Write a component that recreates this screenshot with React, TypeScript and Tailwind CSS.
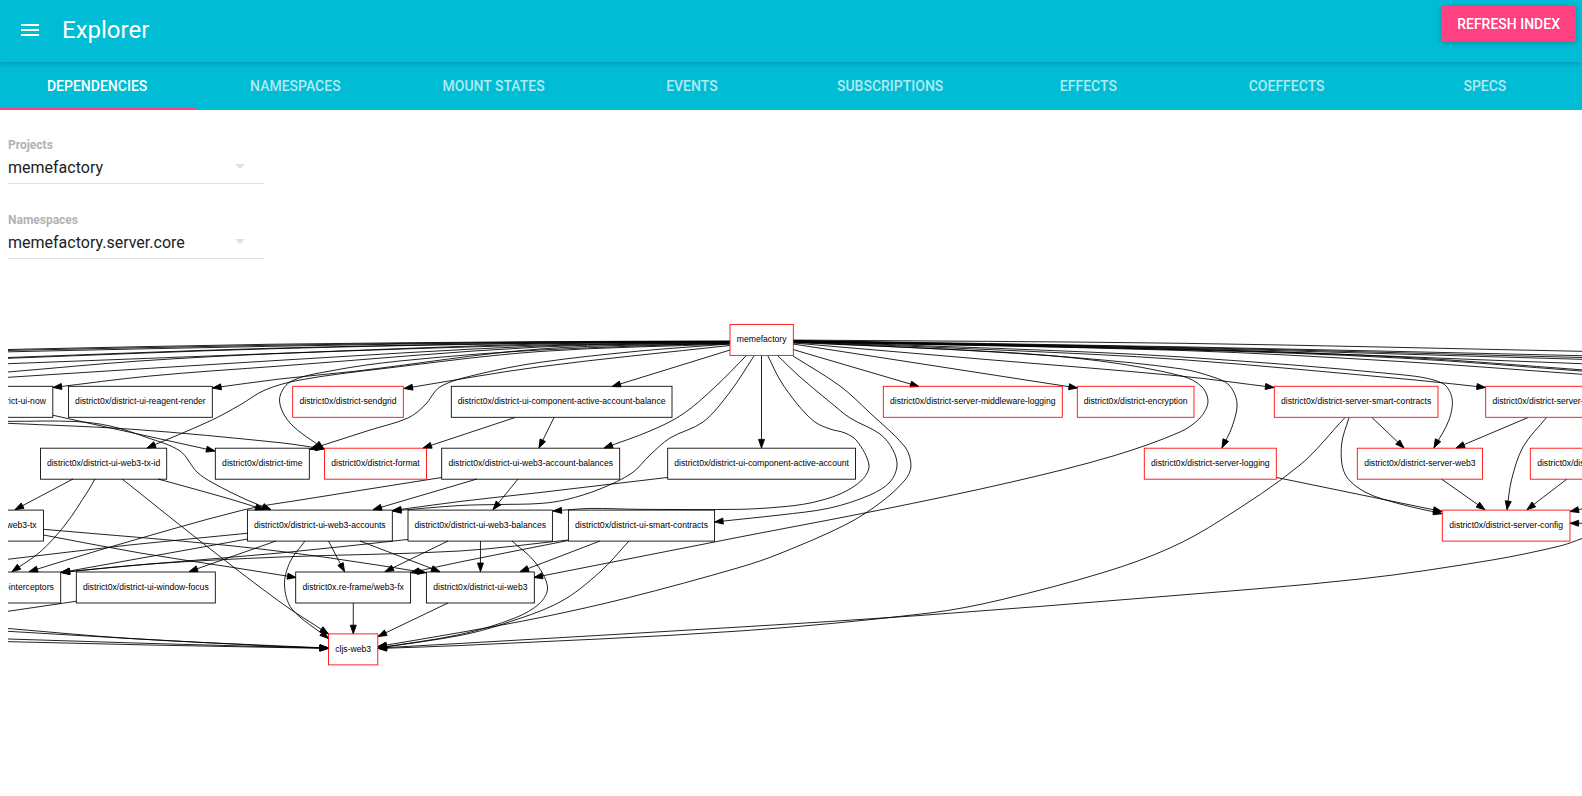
import { useState } from 'react'

type Point = [number, number]

interface GraphNode {
  row: number
  left: number
  right: number
  label: string
  server?: boolean
  align?: 'start' | 'end'
}

const TABS = [
  'Dependencies',
  'Namespaces',
  'Mount states',
  'Events',
  'Subscriptions',
  'Effects',
  'Coeffects',
  'Specs',
]

const NODES: GraphNode[] = [
  { row: 0, left: 730, right: 793.3, label: 'memefactory', server: true },

  { row: 1, left: -60, right: 52.8, label: 'rict-ui-now', align: 'end' },
  { row: 1, left: 68.5, right: 212.3, label: 'district0x/district-ui-reagent-render' },
  { row: 1, left: 292.7, right: 403.3, label: 'district0x/district-sendgrid', server: true },
  { row: 1, left: 451.3, right: 672, label: 'district0x/district-ui-component-active-account-balance' },
  { row: 1, left: 883.3, right: 1062.3, label: 'district0x/district-server-middleware-logging', server: true },
  { row: 1, left: 1077.3, right: 1194, label: 'district0x/district-encryption', server: true },
  { row: 1, left: 1274.3, right: 1438, label: 'district0x/district-server-smart-contracts', server: true },
  { row: 1, left: 1485.7, right: 1640, label: 'district0x/district-server-', server: true, align: 'start' },

  { row: 2, left: 40.5, right: 166.7, label: 'district0x/district-ui-web3-tx-id' },
  { row: 2, left: 215.3, right: 309.3, label: 'district0x/district-time' },
  { row: 2, left: 324.5, right: 426.5, label: 'district0x/district-format', server: true },
  { row: 2, left: 441.7, right: 619.7, label: 'district0x/district-ui-web3-account-balances' },
  { row: 2, left: 667.7, right: 855.5, label: 'district0x/district-ui-component-active-account' },
  { row: 2, left: 1144.3, right: 1276.3, label: 'district0x/district-server-logging', server: true },
  { row: 2, left: 1357.3, right: 1482.5, label: 'district0x/district-server-web3', server: true },
  { row: 2, left: 1530.3, right: 1660, label: 'district0x/dis', server: true, align: 'start' },

  { row: 3, left: -60, right: 43.5, label: 'web3-tx', align: 'end' },
  { row: 3, left: 247.4, right: 392.3, label: 'district0x/district-ui-web3-accounts' },
  { row: 3, left: 408, right: 552.4, label: 'district0x/district-ui-web3-balances' },
  { row: 3, left: 568.4, right: 714.6, label: 'district0x/district-ui-smart-contracts' },
  { row: 3, left: 1442.3, right: 1570, label: 'district0x/district-server-config', server: true },

  { row: 4, left: -60, right: 60.7, label: '-interceptors', align: 'end' },
  { row: 4, left: 76.3, right: 215.3, label: 'district0x/district-ui-window-focus' },
  { row: 4, left: 295.7, right: 410.6, label: 'district0x.re-frame/web3-fx' },
  { row: 4, left: 426.4, right: 534.3, label: 'district0x/district-ui-web3' },

  { row: 5, left: 328.5, right: 377.8, label: 'cljs-web3', server: true },
]

/* Edges that end in an arrow inside the visible part of the graph. */
const ARROWS: Point[][] = [
  [[730, 343], [540, 347], [280, 366], [150, 376], [53, 387.5]],
  [[730, 343.5], [540, 349], [353, 371.5], [280, 379], [212.5, 388]],
  [[730, 344], [540, 351.5], [380, 369], [300, 380], [265, 390], [240, 405], [210, 421], [147, 448]],
  [[730, 343], [540, 350], [400, 361], [330, 371], [290, 382], [279.5, 400], [290, 423], [324, 449]],
  [[730, 345.5], [540, 366.7], [404, 388.5]],
  [[730, 344], [640, 351], [540, 362.3], [475, 375], [440, 387], [425, 405], [408, 418], [370, 430], [309.5, 449.5]],
  [[730, 350], [612, 386.5]],
  [[746, 356], [715, 387], [683, 414], [650, 431], [604, 448]],
  [[754, 356], [730, 392], [703, 422], [670, 438], [650, 455], [632, 473], [600, 489], [566, 499.7], [540, 503.5], [500, 504.5], [460, 505.5], [392.5, 511]],
  [[667.5, 477.5], [540, 492.5], [460, 501.5], [392.5, 510.5]],
  [[761.5, 356], [761.5, 448]],
  [[768, 356], [780, 380], [798, 405], [815, 422], [830, 429], [845, 433], [857, 441], [869, 465], [862, 480], [840, 494], [810, 503], [780, 507], [740, 509.3], [640, 509.3], [590, 508.5], [553, 511]],
  [[778, 356], [800, 377], [830, 402], [850, 418], [880, 434], [893, 450], [897, 466], [890, 482], [870, 495], [830, 508], [780, 515], [740, 519.3], [714.5, 522]],
  [[793, 356], [840, 386], [870, 413], [905, 447], [911, 466], [905, 480], [880, 503], [845, 525], [780, 553.5], [740, 567.3], [627, 598], [543, 617], [460, 632.5], [378, 646.5]],
  [[793, 342.5], [1000, 352], [1100, 361], [1182, 376], [1202, 387], [1208, 402], [1200, 418], [1180, 432], [1113, 456], [1013, 481.7], [880, 510], [780, 529.3], [740, 537], [534, 577.5]],
  [[793, 342], [960, 350], [1080, 358], [1182, 369], [1213, 377], [1229, 385], [1237, 403], [1232, 427], [1222, 447.8]],
  [[793, 341.5], [1000, 348.5], [1182, 357], [1399, 374.5], [1442, 383], [1452, 398], [1449, 420], [1434, 447.8]],
  [[793, 341.8], [1000, 350], [1182, 359.7], [1415, 380], [1485.5, 387.5]],
  [[793, 343], [980, 359], [1180, 376], [1274, 387.5]],
  [[793, 349.5], [919, 386.5]],
  [[793, 344], [1077.5, 388]],
  [[53, 415.3], [215, 451]],
  [[8, 421.3], [75, 421.5], [110, 426], [147, 437.5], [180, 451], [197, 472], [213, 483], [247, 500], [271, 509.7]],
  [[8, 423.3], [133, 429.3], [280, 442.7], [324, 449]],
  [[515, 417.5], [423, 448]],
  [[554, 417.5], [539, 448]],
  [[442, 477.5], [300, 500], [243, 510], [100, 550], [29, 571.7]],
  [[477, 479], [373, 509.7]],
  [[518, 479], [493, 509.7]],
  [[73, 479], [15, 509.7]],
  [[95, 479], [88, 491], [65, 525], [40, 552], [12, 571.7]],
  [[122, 479], [136, 490], [200, 541], [280, 602], [328.5, 634]],
  [[158, 479], [230, 499], [264, 509.7]],
  [[43.5, 529.3], [230, 545.7], [330, 558], [426, 572.7]],
  [[43.5, 535], [140, 553], [230, 567], [296, 577.5]],
  [[247.5, 539], [61, 572.5]],
  [[276, 541], [189, 571.7]],
  [[305, 541], [290, 562], [284.5, 585], [292, 609], [328.5, 638.5]],
  [[328.5, 541], [344.5, 571.7]],
  [[360, 541], [440, 571.7]],
  [[408, 539.5], [280, 553], [150, 564], [61, 572.3]],
  [[568.5, 540], [460, 551], [280, 557], [150, 564], [61, 572.5]],
  [[448, 541], [385, 571.7]],
  [[480.5, 541], [480.5, 571.7]],
  [[512, 541], [535, 562], [547.5, 587], [540, 603], [515, 618], [460, 634.5], [378, 648]],
  [[568.5, 540.5], [460, 562], [410.5, 572.7]],
  [[600, 541], [520, 571.7]],
  [[629, 541], [600, 572], [560, 602], [503, 624], [460, 635.5], [378, 648]],
  [[353.3, 603], [353.3, 633.8]],
  [[448, 603], [378, 636.5]],
  [[8, 628.5], [130, 638.5], [280, 646], [328.5, 648]],
  [[8, 631.3], [130, 638.5], [280, 646.5], [328.5, 648]],
  [[8, 639], [150, 643.5], [280, 647], [328.5, 648]],
  [[8, 641.7], [150, 645], [280, 647.5], [328.5, 648.5]],
  [[1345, 417.5], [1300, 465], [1221, 520], [1170, 548], [1105, 572], [1000, 600], [930, 613], [740, 631], [460, 645.5], [378, 648.5]],
  [[1590, 535], [1582, 538.5], [1560, 546], [1492, 560], [1360, 579], [1160, 596.7], [920, 615.5], [740, 627], [460, 643.5], [378, 648]],
  [[1372, 417.5], [1404, 448]],
  [[1349, 417.5], [1341.5, 445], [1345, 474], [1365, 492], [1400, 504], [1442, 513.7]],
  [[1276.5, 477.5], [1442, 511.5]],
  [[1441.5, 479], [1485, 509.7]],
  [[1528, 417.5], [1456, 448]],
  [[1546.5, 417.5], [1523, 447], [1511.5, 480], [1507, 509.7]],
  [[1567, 479], [1527, 509.7]],
  [[1600, 505], [1570, 511.5]],
  [[1600, 523.3], [1570, 523.3]],
]

/* Edges that leave the visible part before they reach their node. */
const LINES: Point[][] = [
  [[730, 341], [540, 341.7], [270, 344.3], [8, 349.5]],
  [[730, 341.3], [540, 342], [270, 345.3], [8, 350.5]],
  [[730, 341.6], [540, 342.3], [270, 346.3], [8, 351.8]],
  [[730, 341.5], [540, 343], [270, 348.3], [8, 357.5]],
  [[730, 341.8], [540, 343.3], [270, 348.8], [8, 358.3]],
  [[730, 342], [540, 344], [280, 353.3], [8, 363.7]],
  [[730, 342.3], [540, 345], [280, 353.5], [140, 361], [8, 372]],
  [[730, 342.6], [540, 346], [280, 360.3], [8, 377.3]],
  [[793, 340], [1182, 343.3], [1582, 351.3]],
  [[793, 340.5], [1182, 346.8], [1582, 355.7]],
  [[793, 340.8], [1182, 347.5], [1582, 357.5]],
  [[793, 341], [1182, 348.2], [1582, 359.3]],
  [[793, 341.2], [1182, 348.8], [1582, 363.7]],
  [[793, 341.4], [1182, 349.3], [1400, 357], [1582, 369.8]],
  [[793, 341.6], [1182, 349.8], [1400, 358], [1582, 371]],
  [[793, 341.8], [1182, 350.5], [1400, 361.5], [1582, 374.3]],
  [[247.5, 533.3], [130, 545], [8, 559.3]],
  [[76.3, 601.3], [8, 611.3]],
]

/* Layout coordinates are turned into points of the graph's own unit. */
const UNIT = 1828 / 1574
const gx = (x: number) => (x - 8) * UNIT
const gy = (y: number) => (y - 300) * UNIT
const rowTop = (row: number) => 324.4 + row * 61.9

function smoothPath(points: Point[]): string {
  const p = points.map(([x, y]): Point => [gx(x), gy(y)])
  const at = (i: number) => p[Math.max(0, Math.min(p.length - 1, i))]
  const dist = (a: Point, b: Point) => Math.hypot(a[0] - b[0], a[1] - b[1])
  const tangent = (i: number): Point => {
    const a = at(i - 1)
    const b = at(i + 1)
    const d = dist(a, at(i)) + dist(at(i), b) || 1
    return [(b[0] - a[0]) / d, (b[1] - a[1]) / d]
  }
  let d = `M${p[0][0].toFixed(1)},${p[0][1].toFixed(1)}`
  for (let i = 0; i < p.length - 1; i++) {
    const a = p[i]
    const b = p[i + 1]
    const len = dist(a, b) / 3
    const ta = tangent(i)
    const tb = tangent(i + 1)
    const c = [a[0] + ta[0] * len, a[1] + ta[1] * len, b[0] - tb[0] * len, b[1] - tb[1] * len, b[0], b[1]]
    d += `C${c.map((n) => n.toFixed(1)).join(' ')}`
  }
  return d
}

function DependencyGraph() {
  return (
    <svg
      viewBox="0 0 1828 460"
      className="block h-auto w-full overflow-hidden"
      role="img"
      aria-label="Dependency graph"
    >
      <defs>
        <marker
          id="arrow"
          viewBox="0 0 10 7"
          refX="10"
          refY="3.5"
          markerWidth="10"
          markerHeight="7"
          markerUnits="userSpaceOnUse"
          orient="auto"
          className="overflow-visible"
        >
          <path d="M0 0L10 3.5L0 7Z" fill="black" stroke="black" />
        </marker>
      </defs>
      <g fill="none" stroke="black">
        {LINES.map((points, i) => (
          <path key={i} d={smoothPath(points)} />
        ))}
        {ARROWS.map((points, i) => (
          <path key={i} d={smoothPath(points)} markerEnd="url(#arrow)" />
        ))}
      </g>
      {NODES.map((n) => {
        const left = gx(n.left)
        const right = gx(n.right)
        const top = gy(rowTop(n.row))
        const x = n.align === 'start' ? left + 8 : n.align === 'end' ? right - 8 : (left + right) / 2
        const anchor = n.align ?? 'middle'
        return (
          <g key={`${n.row}-${n.label}`}>
            <rect
              x={left}
              y={top}
              width={right - left}
              height={36}
              fill="none"
              stroke={n.server ? 'red' : 'black'}
            />
            <text x={x} y={top + 20.7} textAnchor={anchor} className="font-['Liberation_Sans',sans-serif] text-[10px]">
              {n.label}
            </text>
          </g>
        )
      })}
    </svg>
  )
}

function SelectField({ id, label, value }: { id: string; label: string; value: string }) {
  return (
    <div className="flex w-64 flex-col border-b border-[#e0e0e0]">
      <label htmlFor={id} className="text-xs font-bold text-[#b2b2b2]">
        {label}
      </label>
      <div className="grid h-[30px] items-center">
        <select
          id={id}
          defaultValue={value}
          className="col-start-1 row-start-1 w-full appearance-none bg-transparent text-base text-[#212121] outline-none"
        >
          <option value={value}>{value}</option>
        </select>
        <svg
          viewBox="0 0 24 24"
          className="pointer-events-none col-start-1 row-start-1 mr-3 size-6 justify-self-end fill-[#e0e0e0]"
          aria-hidden="true"
        >
          <path d="M7 8l5 5 5-5z" />
        </svg>
      </div>
    </div>
  )
}

export default function App() {
  const [active, setActive] = useState(0)

  return (
    <div className="min-h-screen bg-white font-[Roboto,sans-serif]">
      <header className="relative z-10 flex h-[62px] items-start justify-between bg-[#00bcd4] pr-1.5 pl-[18px] text-white shadow-[0_1px_6px_rgba(0,0,0,0.12),0_1px_4px_rgba(0,0,0,0.12)]">
        <div className="flex h-[60px] items-center gap-5">
          <button type="button" aria-label="Menu" className="size-6">
            <svg viewBox="0 0 24 24" className="size-6 fill-white" aria-hidden="true">
              <path d="M3 18h18v-2H3v2zm0-5h18v-2H3v2zm0-7v2h18V6H3z" />
            </svg>
          </button>
          <h1 className="text-2xl">Explorer</h1>
        </div>
        <button
          type="button"
          className="mt-1.5 h-9 rounded-xs bg-[#ff4081] px-4 text-sm font-medium uppercase shadow-[0_1px_6px_rgba(0,0,0,0.12),0_1px_4px_rgba(0,0,0,0.12)]"
        >
          Refresh index
        </button>
      </header>

      <nav className="overflow-hidden bg-[#00bcd4]">
        <div role="tablist" className="-mx-0.5 grid grid-cols-8">
          {TABS.map((tab, i) => (
            <button
              key={tab}
              type="button"
              role="tab"
              aria-selected={i === active}
              onClick={() => setActive(i)}
              className={
                i === active
                  ? 'h-12 border-b-2 border-[#ff4081] pt-0.5 text-sm font-medium text-white uppercase'
                  : 'h-12 border-b-2 border-transparent pt-0.5 text-sm font-medium text-white/70 uppercase'
              }
            >
              {tab}
            </button>
          ))}
        </div>
      </nav>

      <main className="pl-2">
        <form className="flex flex-col gap-7 pt-[27px] pb-[41px]">
          <SelectField id="project" label="Projects" value="memefactory" />
          <SelectField id="namespace" label="Namespaces" value="memefactory.server.core" />
        </form>
        <DependencyGraph />
      </main>
    </div>
  )
}
